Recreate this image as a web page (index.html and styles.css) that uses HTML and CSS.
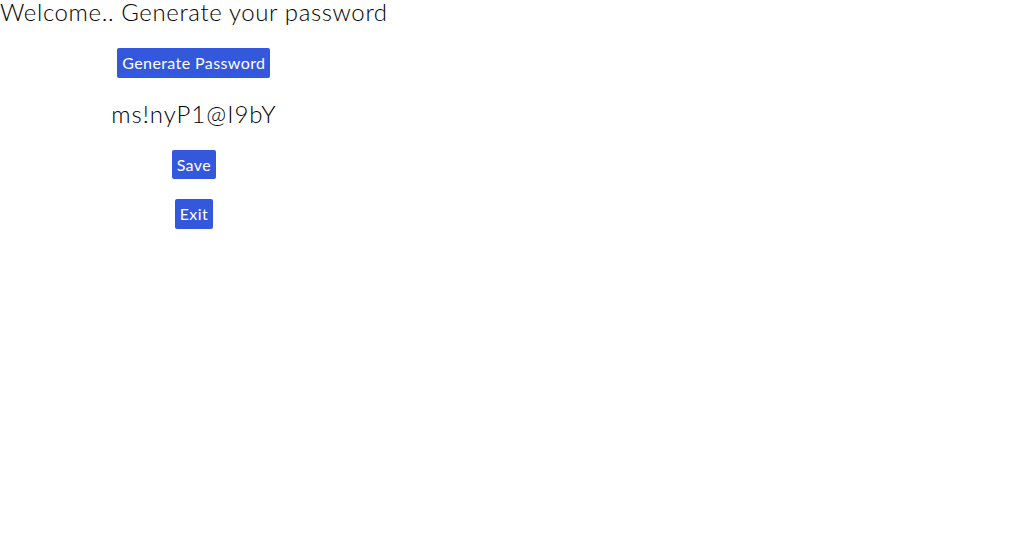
FILE: index.html
```html
<!DOCTYPE html>
<html>
<head>
<meta charset="utf-8">
<link rel="stylesheet" href="styles.css">
</head>
<body>
<div class="app">
  <h1 class="title">Welcome.. Generate your password</h1>
  <button class="btn">Generate Password</button>
  <div class="password">ms!nyP1@I9bY</div>
  <button class="btn">Save</button>
  <button class="btn">Exit</button>
</div>
</body>
</html>
```
FILE: styles.css
```css
html, body {
  margin: 0;
  padding: 0;
  background: #fff;
}
body {
  font-family: Lato, "Liberation Sans", sans-serif;
  color: #000;
}
.app {
  display: inline-flex;
  flex-direction: column;
  align-items: center;
  gap: 20px;
}
.title {
  margin: 0 0 4px 0;
  font-size: 24px;
  font-weight: 300;
  line-height: 24px;
  letter-spacing: 0.62px;
  color: #000;
}
.btn {
  font-family: Lato, "Liberation Sans", sans-serif;
  font-size: 16px;
  line-height: 19.5px;
  letter-spacing: 0.4px;
  color: #fff;
  background: #3458dc;
  border: none;
  border-radius: 2px;
  padding: 5px 5px;
  margin: 0;
}
.password {
  font-size: 24px;
  font-weight: 300;
  line-height: 32px;
  letter-spacing: 1px;
  color: #000;
}
```
